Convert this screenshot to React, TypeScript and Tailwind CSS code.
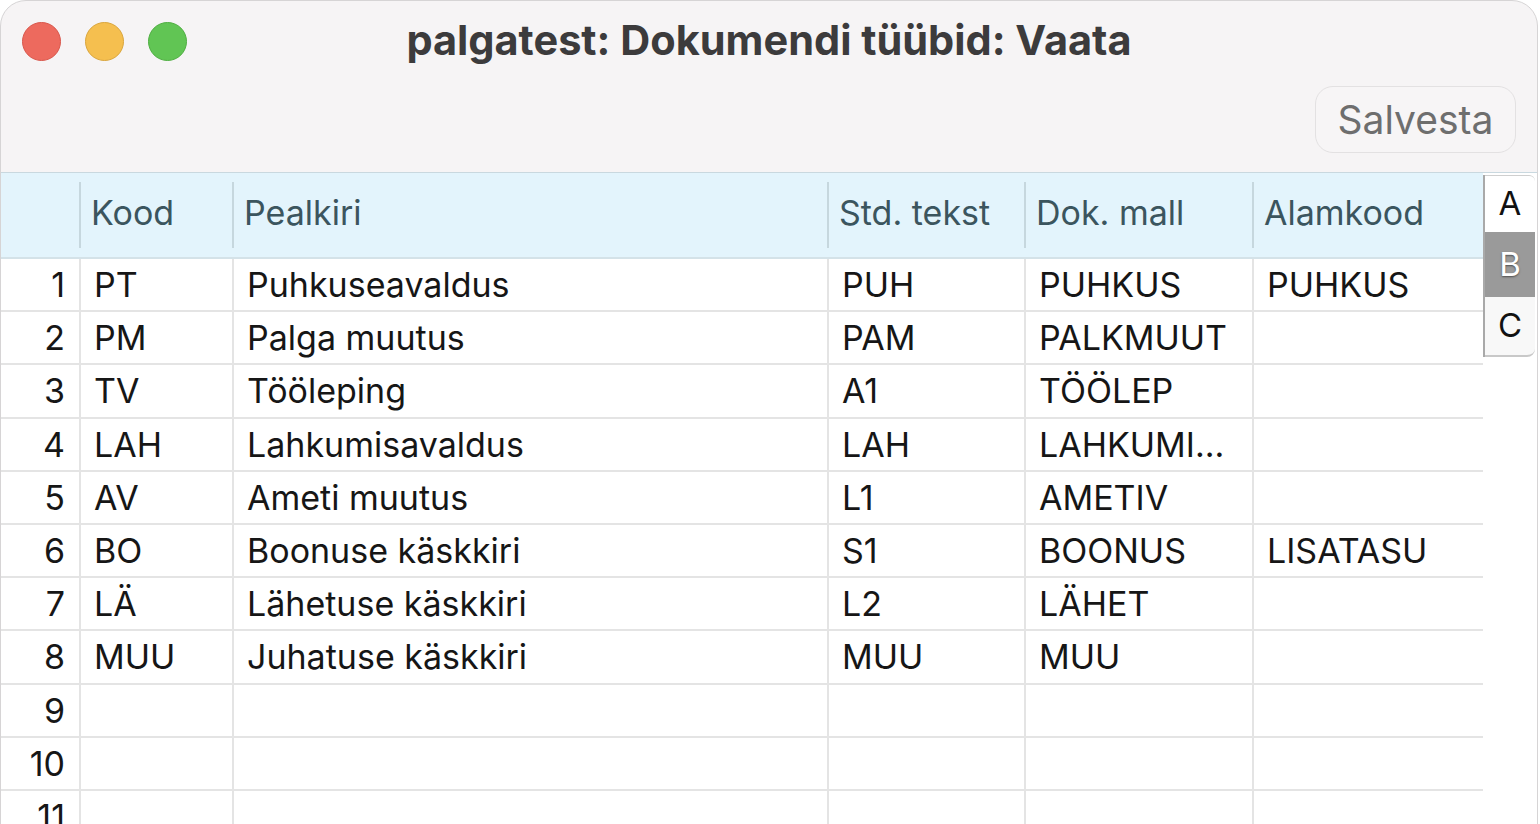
import React from "react";

type Row = { kood: string; pealkiri: string; std: string; mall: string; alam: string };

const rows: Row[] = [
  { kood: "PT", pealkiri: "Puhkuseavaldus", std: "PUH", mall: "PUHKUS", alam: "PUHKUS" },
  { kood: "PM", pealkiri: "Palga muutus", std: "PAM", mall: "PALKMUUT", alam: "" },
  { kood: "TV", pealkiri: "Tööleping", std: "A1", mall: "TÖÖLEP", alam: "" },
  { kood: "LAH", pealkiri: "Lahkumisavaldus", std: "LAH", mall: "LAHKUMI...", alam: "" },
  { kood: "AV", pealkiri: "Ameti muutus", std: "L1", mall: "AMETIV", alam: "" },
  { kood: "BO", pealkiri: "Boonuse käskkiri", std: "S1", mall: "BOONUS", alam: "LISATASU" },
  { kood: "LÄ", pealkiri: "Lähetuse käskkiri", std: "L2", mall: "LÄHET", alam: "" },
  { kood: "MUU", pealkiri: "Juhatuse käskkiri", std: "MUU", mall: "MUU", alam: "" },
  { kood: "", pealkiri: "", std: "", mall: "", alam: "" },
  { kood: "", pealkiri: "", std: "", mall: "", alam: "" },
  { kood: "", pealkiri: "", std: "", mall: "", alam: "" },
];

const cols = "grid grid-cols-[78px_153px_595px_197px_228px_231px]";

export default function App() {
  return (
    <div className="w-[1540px] h-[824px] overflow-hidden bg-white font-['Inter',sans-serif]">
      <div className="w-[1538px] h-[840px] rounded-tl-[26px] rounded-tr-[26px] border border-[#d6d4d5] bg-[#f6f4f5] flex flex-col overflow-hidden">
        {/* title bar + toolbar */}
        <div className="h-[171px] shrink-0 flex flex-col">
          <div className="h-[80px] flex items-center relative">
            <div className="flex items-center gap-[24px] pl-[21px]">
              <span className="w-[39px] h-[39px] rounded-full bg-[#ed6a5e] border border-[#d8574c]" />
              <span className="w-[39px] h-[39px] rounded-full bg-[#f5bf4f] border border-[#d9a53c]" />
              <span className="w-[39px] h-[39px] rounded-full bg-[#61c554] border border-[#4fae42]" />
            </div>
            <div className="absolute inset-x-0 top-[13px] text-center text-[41.5px] leading-[52px] font-bold text-[#3c3b3c]">
              palgatest: Dokumendi tüübid: Vaata
            </div>
          </div>
          <div className="flex justify-end pr-[21px] pt-[5px]">
            <button className="w-[201px] h-[67px] rounded-[18px] border border-[#e3e1e2] bg-[#f7f5f6] text-[39px] text-[#6e6e6e] leading-none">
              Salvesta
            </button>
          </div>
        </div>

        {/* table area */}
        <div className="flex flex-1 border-t border-[#c9d8df] bg-white">
          <div className="w-[1482px] shrink-0">
            <div className={`${cols} h-[86px] bg-[#e3f4fc] border-b-2 border-[#d4e2e8] text-[34px] text-[#3b555e]`}>
              <div />
              {["Kood", "Pealkiri", "Std. tekst", "Dok. mall", "Alamkood"].map((h) => (
                <div key={h} className="flex items-center">
                  <div className="w-[2px] h-[66px] bg-[#c6d7de]" />
                  <span className="pl-[10px] pb-[6px]">{h}</span>
                </div>
              ))}
            </div>
            {rows.map((r, i) => (
              <div
                key={i}
                className={`${cols} h-[53.2px] border-b-2 border-[#e4e4e4] text-[34px] text-[#161616]`}
              >
                <div className="flex items-center justify-end pr-[14px]">{i + 1}</div>
                <div className="flex items-center pl-[13px] border-l-2 border-[#e4e4e4]">{r.kood}</div>
                <div className="flex items-center pl-[13px] border-l-2 border-[#e4e4e4]">{r.pealkiri}</div>
                <div className="flex items-center pl-[13px] border-l-2 border-[#e4e4e4]">{r.std}</div>
                <div className="flex items-center pl-[13px] border-l-2 border-[#e4e4e4]">{r.mall}</div>
                <div className="flex items-center pl-[13px] border-l-2 border-[#e4e4e4]">{r.alam}</div>
              </div>
            ))}
          </div>

          {/* letter tabs */}
          <div className="flex-1 pt-[2px]">
            <div className="flex flex-col w-[52px] border-l-2 border-[#a9a9a9] text-[33px]">
              <div className="h-[57px] flex items-center justify-center bg-white text-[#111] rounded-tr-[6px] border-t border-[#cfcfcf]">
                A
              </div>
              <div className="h-[65px] flex items-center justify-center bg-[#9a9a9a] text-white [text-shadow:0_1px_2px_rgba(0,0,0,0.5)]">
                B
              </div>
              <div className="h-[60px] flex items-center justify-center bg-[#f8f8f8] text-[#111] rounded-br-[8px] border-b-2 border-[#c8c8c8]">
                C
              </div>
            </div>
          </div>
        </div>
      </div>
    </div>
  );
}
